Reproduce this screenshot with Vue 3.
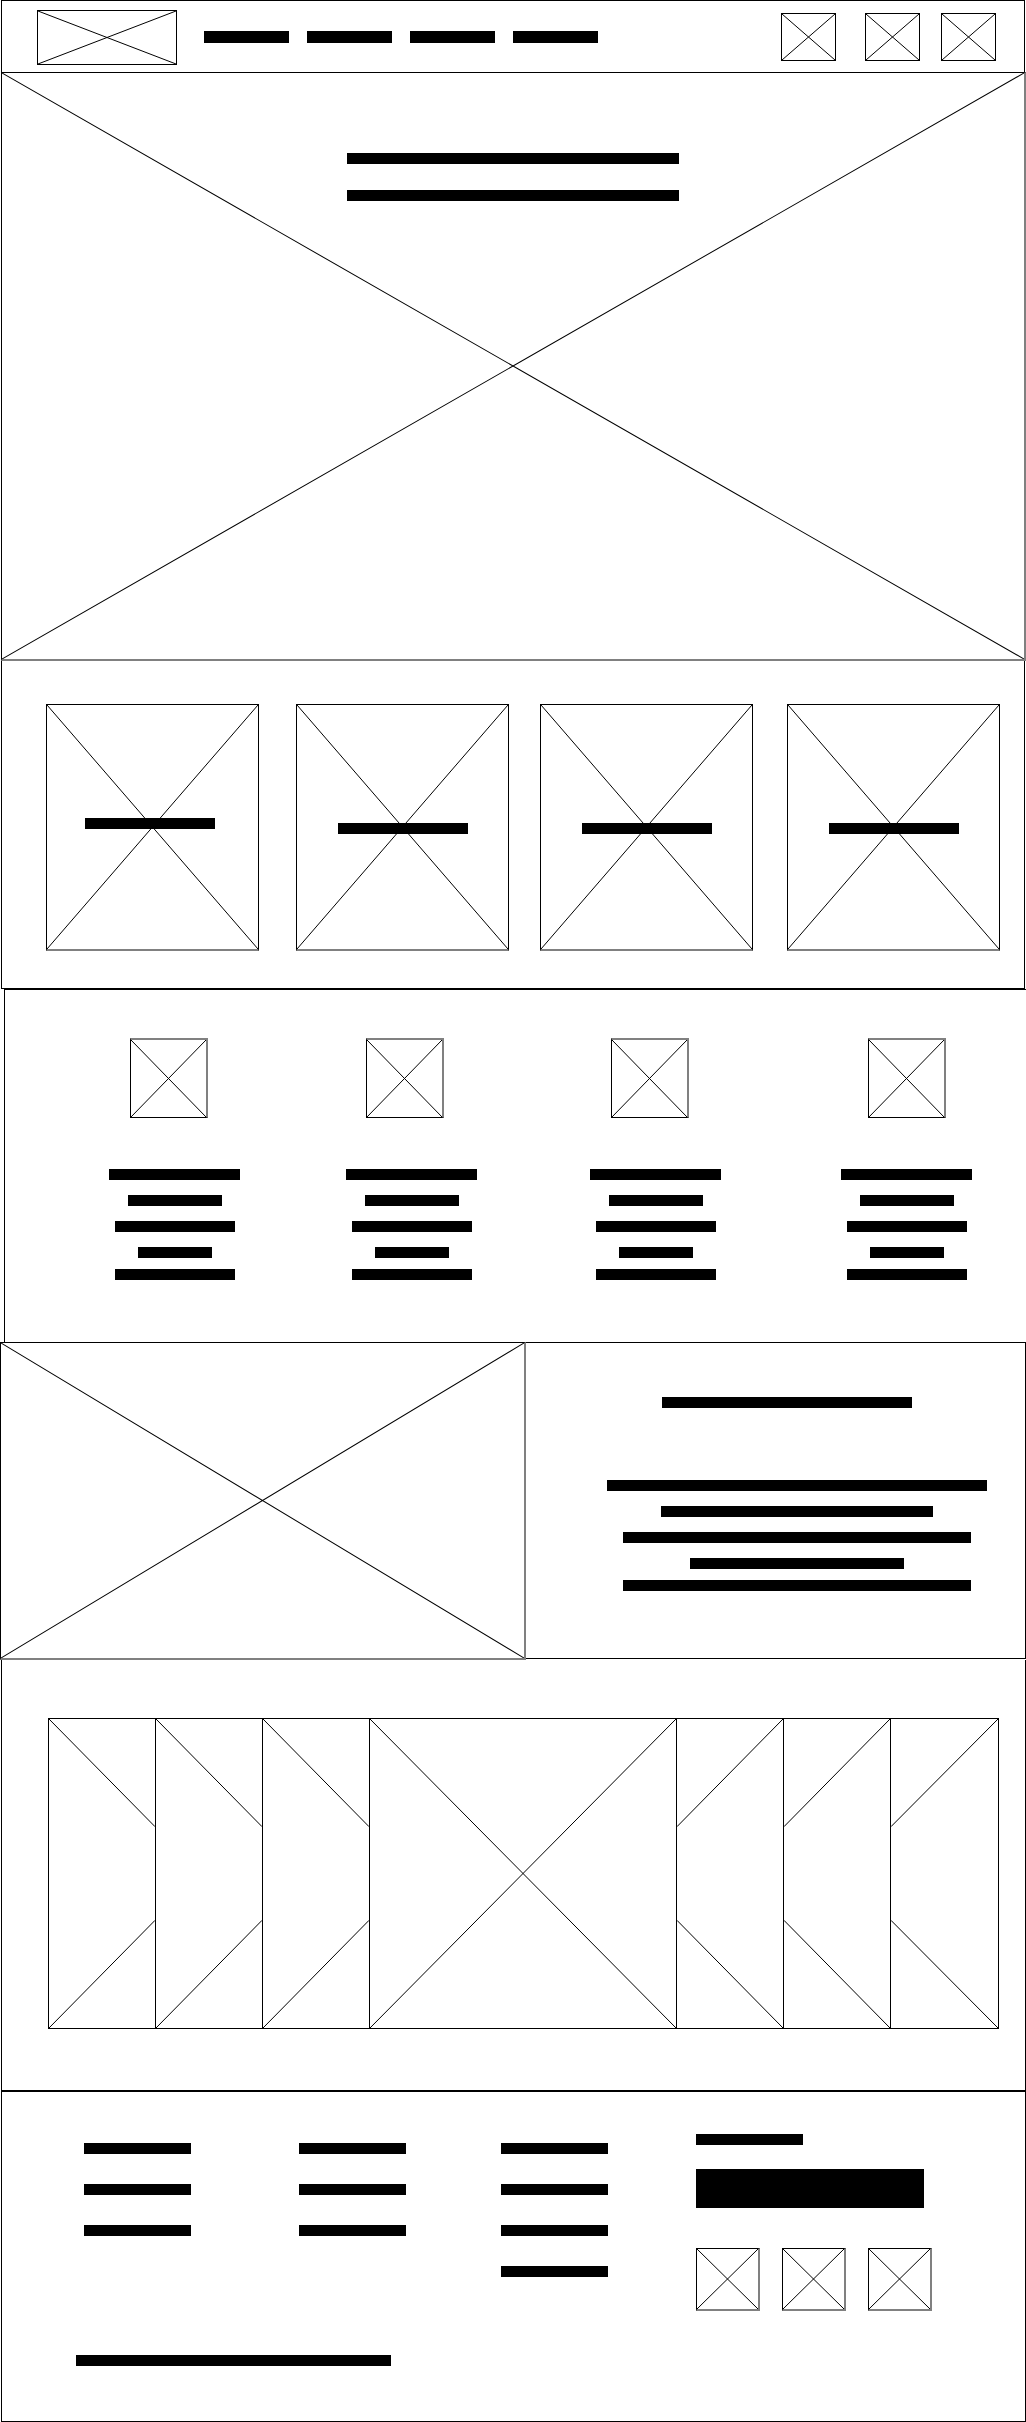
<script setup>
import { h } from 'vue'

// Diagonal cross that stretches to the corners of its parent box
const Cross = () =>
  h('svg', { class: 'cross', viewBox: '0 0 100 100', preserveAspectRatio: 'none', 'aria-hidden': 'true' }, [
    h('path', { d: 'M0 0L100 100M100 0L0 100', 'vector-effect': 'non-scaling-stroke' }),
  ])

const navItems = ['Shop', 'Collections', 'Stories', 'About']
const actions = ['Search', 'Account', 'Cart']
const categories = ['Category one', 'Category two', 'Category three', 'Category four']
const features = 4
const featureLines = [131, 94, 120, 74, 120]
const storyLines = [380, 272, 348, 214, 348]
const linkColumns = [3, 3, 4]
const socials = ['Social one', 'Social two', 'Social three']
</script>

<template>
  <div class="page">
    <header class="header">
      <a class="logo box" href="#" aria-label="Home"><Cross /></a>
      <nav class="nav" aria-label="Main">
        <a v-for="item in navItems" :key="item" class="nav-link" href="#" :aria-label="item"></a>
      </nav>
      <div class="actions">
        <button v-for="action in actions" :key="action" class="action box" type="button" :aria-label="action">
          <Cross />
        </button>
      </div>
    </header>

    <main>
      <section class="hero">
        <Cross />
        <div class="bar hero-line"></div>
        <div class="bar hero-line"></div>
      </section>

      <section class="categories">
        <a
          v-for="(category, i) in categories"
          :key="category"
          class="tile box"
          :class="{ 'tile-raised': i === 0 }"
          href="#"
          :aria-label="category"
        >
          <Cross />
          <span class="bar tile-label"></span>
        </a>
      </section>

      <section class="features">
        <div class="feature-icons">
          <div v-for="n in features" :key="n" class="feature-icon box"><Cross /></div>
        </div>
        <div class="feature-texts">
          <div v-for="n in features" :key="n" class="lines">
            <div v-for="(w, i) in featureLines" :key="i" class="bar" :style="{ width: w + 'px' }"></div>
          </div>
        </div>
      </section>

      <section class="story">
        <div class="story-media"><Cross /></div>
        <div class="story-copy">
          <div class="story-heading"><div class="bar story-title"></div></div>
          <div class="lines">
            <div v-for="(w, i) in storyLines" :key="i" class="bar" :style="{ width: w + 'px' }"></div>
          </div>
        </div>
      </section>

      <section class="carousel">
        <div class="slides">
          <div v-for="n in 3" :key="'l' + n" class="slide slide-left">
            <svg class="cross" viewBox="0 0 107 310" preserveAspectRatio="none" aria-hidden="true">
              <path d="M0 0L107 108M0 310L107 202" vector-effect="non-scaling-stroke" />
            </svg>
          </div>
          <div class="slide slide-main"><Cross /></div>
          <div v-for="n in 3" :key="'r' + n" class="slide slide-right">
            <svg class="cross" viewBox="0 0 107 310" preserveAspectRatio="none" aria-hidden="true">
              <path d="M107 0L0 108M107 310L0 202" vector-effect="non-scaling-stroke" />
            </svg>
          </div>
        </div>
      </section>
    </main>

    <footer class="footer">
      <div class="footer-grid">
        <ul v-for="(count, c) in linkColumns" :key="c" class="links">
          <li v-for="n in count" :key="n">
            <a class="bar footer-link" href="#" :aria-label="'Link ' + n"></a>
          </li>
        </ul>
        <div class="signup">
          <label class="bar footer-link" for="email" aria-label="Email"></label>
          <input id="email" class="email" type="email" />
          <div class="socials">
            <a v-for="social in socials" :key="social" class="social box" href="#" :aria-label="social"><Cross /></a>
          </div>
        </div>
      </div>
      <div class="bar legal"></div>
    </footer>
  </div>
</template>

<style>
body {
  margin: 0;
  background: #fff;
}
</style>

<style scoped>
.page,
.page * {
  box-sizing: border-box;
}

.page {
  color: #000;
  font-family: 'Liberation Sans', Arial, sans-serif;
}

.bar {
  display: block;
  height: 11px;
  max-width: 100%;
  background: #000;
}

.box {
  position: relative;
  display: block;
  border: 1px solid #000;
}

.cross {
  position: absolute;
  inset: 0;
  display: block;
  width: 100%;
  height: 100%;
  fill: none;
  stroke: #000;
  stroke-width: 1px;
}

.lines {
  display: flex;
  flex-direction: column;
  align-items: center;
  gap: 15px;
}

.lines .bar:last-child {
  margin-top: -4px;
}

/* Header */
.header {
  display: flex;
  align-items: center;
  min-height: 72px;
  margin: 0 1px;
  padding: 1px 28px 0 35px;
  border: 1px solid #000;
  border-bottom: 0;
}

.logo {
  width: 140px;
  height: 55px;
}

.nav {
  display: flex;
  gap: 18px;
  margin-left: 27px;
}

.nav-link {
  width: 85px;
  height: 12px;
  background: #000;
}

.actions {
  display: grid;
  grid-template-columns: 84px 76px 55px;
  margin-left: auto;
}

.action {
  width: 55px;
  height: 48px;
  padding: 0;
  background: none;
}

/* Hero */
.hero {
  position: relative;
  display: flex;
  flex-direction: column;
  align-items: center;
  gap: 26px;
  min-height: 589px;
  margin-left: 1px;
  padding-top: 80px;
  border: 1px solid #000;
  border-right: 2px solid #808080;
  border-bottom: 2px solid #808080;
}

.hero-line {
  width: 332px;
}

/* Categories */
.categories {
  display: grid;
  grid-template-columns: 250fr 244fr 247fr 213fr;
  margin: 0 1px;
  padding: 43px 24px 37px 44px;
  border: 1px solid #000;
  border-top: 0;
}

.tile {
  display: flex;
  align-items: center;
  justify-content: center;
  width: 213px;
  height: 247px;
  padding-top: 2px;
  border-bottom: 2px solid #808080;
}

.tile-label {
  position: relative;
  width: 130px;
}

.tile-raised {
  padding: 0 6px 8px 0;
}

/* Features */
.features {
  margin-left: 4px;
  padding: 48px 0 62px;
  border-top: 1px solid #000;
  border-left: 1px solid #000;
}

.feature-icons {
  display: grid;
  grid-template-columns: 236fr 245fr 257fr 78fr;
  padding: 0 80px 0 125px;
}

.feature-icon {
  width: 78px;
  height: 80px;
  border-top: 2px solid #808080;
  border-right: 2px solid #808080;
}

.feature-texts {
  display: grid;
  grid-template-columns: 237fr 244fr 251fr 131fr;
  padding: 51px 54px 0 104px;
}

.feature-texts .lines {
  width: 131px;
}

/* Story */
.story {
  display: grid;
  grid-template-columns: 526fr 500fr;
  align-items: start;
}

.story-media {
  position: relative;
  height: 318px;
  border: 1px solid #000;
  border-right: 2px solid #808080;
  border-bottom: 2px solid #808080;
}

.story-copy {
  height: 317px;
  padding: 54px 0 0 43px;
  border: 1px solid #000;
  border-left: 0;
}

.story-heading {
  display: flex;
  justify-content: center;
  padding-right: 20px;
  margin-bottom: 72px;
}

.story-title {
  width: 250px;
}

/* Carousel */
.carousel {
  margin-left: 1px;
  padding: 58px 26px 61px 46px;
  border: 1px solid #000;
  border-top: 0;
  border-bottom-width: 2px;
}

.slides {
  display: grid;
  grid-template-columns: 107fr 107fr 107fr 308fr 107fr 107fr 108fr;
  height: 311px;
}

.slide {
  position: relative;
  border: 1px solid #000;
}

.slide-left {
  border-right: 0;
}

.slide-right {
  border-left: 0;
}

/* Footer */
.footer {
  margin-left: 1px;
  padding: 42px 92px 55px 74px;
  border: 1px solid #000;
  border-top: 0;
}

.footer-grid {
  display: grid;
  grid-template-columns: 215fr 202fr 195fr 237fr;
  padding-left: 8px;
}

.links {
  display: flex;
  flex-direction: column;
  gap: 30px;
  margin: 0;
  padding: 9px 0 0;
  list-style: none;
}

.footer-link {
  width: 107px;
}

.email {
  display: block;
  width: 228px;
  height: 39px;
  margin: 24px 0 40px;
  padding: 0 12px;
  border: 0;
  border-radius: 0;
  background: #000;
  color: #fff;
  font: inherit;
}

.socials {
  display: flex;
  gap: 22px;
}

.social {
  width: 64px;
  height: 63px;
  border-right: 2px solid #808080;
  border-bottom: 2px solid #808080;
}

.legal {
  width: 315px;
  margin-top: 44px;
}
</style>
